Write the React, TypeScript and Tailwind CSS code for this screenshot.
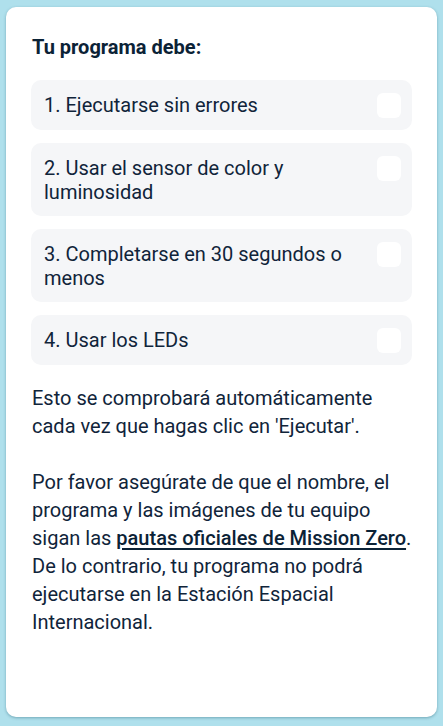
import React from "react";

const checks = [
  "1. Ejecutarse sin errores",
  "2. Usar el sensor de color y luminosidad",
  "3. Completarse en 30 segundos o menos",
  "4. Usar los LEDs",
];

const CheckItem = ({ label }: { label: string }) => {
  return (
    <li className="flex items-start justify-between gap-3 rounded-[10px] bg-[#f5f6f8] py-3 pl-[13px] pr-[11px]">
      <span className="pt-[1px] leading-6">{label}</span>
      <span className="mt-[1px] h-[25px] w-[24px] shrink-0 rounded-[6px] bg-white" />
    </li>
  );
};

export default function App() {
  return (
    <div className="min-h-[726px] bg-[#afe0ec] px-[6px] pt-[7px] pb-[9px] font-['Roboto',sans-serif] text-[20px] text-[#10243a]">
      <div className="h-[710px] rounded-[10px] bg-white px-[25px] pt-[28px] shadow-[0_1px_3px_rgba(40,100,120,0.45)]">
        <h2 className="pl-[1px] text-[20px] font-bold leading-6 text-[#0b2236]">
          Tu programa debe:
        </h2>
        <ul className="mt-[21px] flex flex-col gap-[13px]">
          {checks.map((c) => (
            <CheckItem key={c} label={c} />
          ))}
        </ul>
        <p className="mt-[19px] pl-[1px] leading-7">
          Esto se comprobará automáticamente cada vez que hagas clic en
          'Ejecutar'.
        </p>
        <p className="mt-7 pl-[1px] leading-7">
          Por favor asegúrate de que el nombre, el programa y las imágenes de tu
          equipo sigan las{" "}
          <a
            href="#"
            className="font-medium text-[#0b2236] underline decoration-[1.5px] underline-offset-[3px]"
          >
            pautas oficiales de Mission Zero
          </a>
          . De lo contrario, tu programa no podrá ejecutarse en la Estación
          Espacial Internacional.
        </p>
      </div>
    </div>
  );
}
